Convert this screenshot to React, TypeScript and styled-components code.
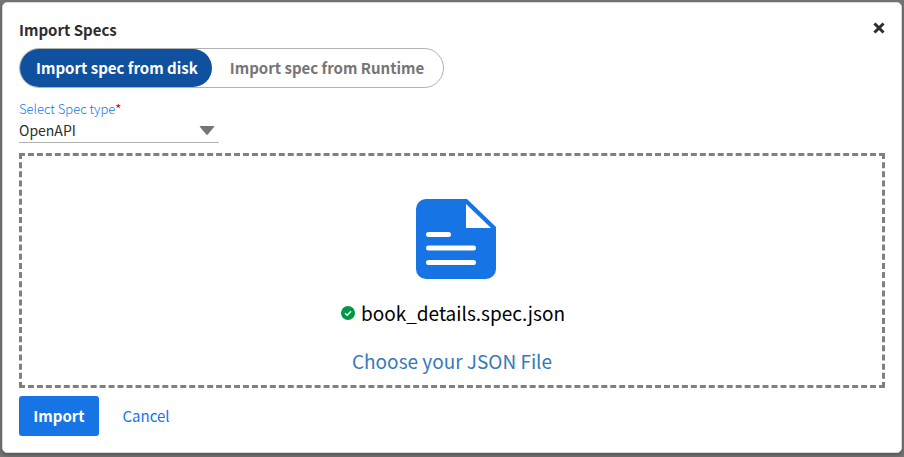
import React, { useState } from "react";
import styled, { createGlobalStyle } from "styled-components";

const GlobalStyle = createGlobalStyle`
  *, *::before, *::after { box-sizing: border-box; }
  body {
    margin: 0;
    background: #757575;
    color: #2d2d2d;
    font-family: "Noto Sans CJK JP", "Noto Sans", sans-serif;
    font-size: 15px;
    line-height: 20px;
  }
  button, select { font: inherit; }
`;

const Overlay = styled.div`
  min-height: 100vh;
  padding: 2px;
  background: #757575;
`;

const Dialog = styled.section`
  padding: 16px;
  background: #fff;
  border: 1px solid #dadada;
  border-radius: 5px;
  box-shadow: 0 2px 4px rgba(0, 0, 0, 0.3);
`;

const Header = styled.header`
  display: flex;
  align-items: flex-start;
  justify-content: space-between;
  height: 29px;
`;

const Title = styled.h1`
  margin: 0;
  font-size: 15px;
  font-weight: 700;
  line-height: 22px;
`;

const CloseButton = styled.button`
  display: flex;
  padding: 3px 0;
  color: #2d2d2d;
  background: none;
  border: 0;
  cursor: pointer;
`;

const Segments = styled.div`
  display: inline-flex;
  height: 40px;
  border: 1px solid #b1b1b1;
  border-radius: 20px;
`;

const Segment = styled.button<{ $active: boolean }>`
  padding: 0 14px 0 16px;
  color: ${(p) => (p.$active ? "#fff" : "#757575")};
  background: ${(p) => (p.$active ? "#0f519f" : "transparent")};
  border: 0;
  border-radius: 20px;
  font-weight: 700;
  text-align: left;
  white-space: nowrap;
  cursor: pointer;

  &:last-child { padding: 0 19px 0 18px; }
`;

const Field = styled.div`
  display: flex;
  flex-direction: column;
  width: 200px;
  margin-top: 11px;
`;

const Label = styled.label`
  color: #1774e5;
  font-size: 13px;
  font-weight: 300;
  line-height: 20px;
`;

const Required = styled.span`
  color: #f00000;
  font-weight: 400;
`;

const SelectWrap = styled.div`
  display: flex;
  align-items: flex-start;
  height: 24px;
  border-bottom: 1px solid #b1b1b1;

  svg { margin: 7px 4px 0 -20px; pointer-events: none; }
`;

const Select = styled.select`
  flex: 1;
  height: 22px;
  padding: 0;
  color: #2d2d2d;
  background: transparent;
  border: 0;
  border-radius: 0;
  appearance: none;
  font-size: 14px;
`;

const DropZone = styled.div`
  display: flex;
  flex-direction: column;
  align-items: center;
  height: 235px;
  margin-top: 10px;
  padding-top: 43px;
  border: 3px dashed #808080;
`;

const FileIcon = styled.div`
  display: flex;
  padding-left: 8px;
`;

const FileRow = styled.div`
  display: flex;
  align-items: center;
  gap: 6px;
  margin-top: 20px;
  padding-left: 2px;
  color: #000;
  font-size: 19px;
  line-height: 28px;
`;

const ChooseLink = styled.a`
  margin-top: 20px;
  color: #337ab7;
  font-size: 19px;
  line-height: 28px;
  text-decoration: none;
`;

const Footer = styled.footer`
  display: flex;
  gap: 7px;
  margin-top: 8px;
`;

const ActionButton = styled.button<{ $primary?: boolean }>`
  min-width: 80px;
  height: 40px;
  padding: 0 14px;
  color: ${(p) => (p.$primary ? "#fff" : "#1774e5")};
  background: ${(p) => (p.$primary ? "#1774e5" : "transparent")};
  border: 0;
  border-radius: 3px;
  font-weight: ${(p) => (p.$primary ? 700 : 400)};
  cursor: pointer;
`;

const CloseIcon = () => (
  <svg width="12" height="12" viewBox="0 0 12 12" aria-hidden="true">
    <path d="M2.5 2.5 9.5 9.5M9.5 2.5 2.5 9.5" stroke="currentColor" strokeWidth="3" strokeLinecap="square" />
  </svg>
);

const CaretIcon = () => (
  <svg width="16" height="10" viewBox="0 0 16 10" aria-hidden="true">
    <path d="M1.5 0h13q1.5 0 .5 1L9 8.3q-1 1-2 0L1 1Q0 0 1.5 0Z" fill="#757575" />
  </svg>
);

const DocumentIcon = () => (
  <svg width="80" height="80" viewBox="0 0 80 80" aria-hidden="true">
    <path d="M10 0h41l29 28v42a10 10 0 0 1-10 10H10A10 10 0 0 1 0 70V10A10 10 0 0 1 10 0Z" fill="#1774e5" />
    <path d="M50 5v24h25Z" fill="#fff" />
    <path d="M12.5 35.5h20M12.5 49h45M12.5 63.5h45" stroke="#fff" strokeWidth="5" strokeLinecap="round" />
  </svg>
);

const CheckIcon = () => (
  <svg width="14" height="14" viewBox="0 0 14 14" aria-hidden="true">
    <circle cx="7" cy="7" r="7" fill="#009845" />
    <path d="m4 7.2 2.2 2L10 5.2" fill="none" stroke="#fff" strokeWidth="1.4" />
  </svg>
);

const sources = ["Import spec from disk", "Import spec from Runtime"];

export default function App() {
  const [source, setSource] = useState(0);

  return (
    <Overlay>
      <GlobalStyle />
      <Dialog role="dialog" aria-labelledby="dialog-title">
        <Header>
          <Title id="dialog-title">Import Specs</Title>
          <CloseButton type="button" aria-label="Close">
            <CloseIcon />
          </CloseButton>
        </Header>
        <Segments role="group" aria-label="Spec source">
          {sources.map((name, i) => (
            <Segment key={name} type="button" $active={source === i} aria-pressed={source === i} onClick={() => setSource(i)}>
              {name}
            </Segment>
          ))}
        </Segments>
        <Field>
          <Label htmlFor="spec-type">
            Select Spec type<Required>*</Required>
          </Label>
          <SelectWrap>
            <Select id="spec-type" defaultValue="OpenAPI">
              <option>OpenAPI</option>
            </Select>
            <CaretIcon />
          </SelectWrap>
        </Field>
        <DropZone>
          <FileIcon>
            <DocumentIcon />
          </FileIcon>
          <FileRow>
            <CheckIcon />
            <span>book_details.spec.json</span>
          </FileRow>
          <ChooseLink href="#">Choose your JSON File</ChooseLink>
        </DropZone>
        <Footer>
          <ActionButton type="button" $primary>Import</ActionButton>
          <ActionButton type="button">Cancel</ActionButton>
        </Footer>
      </Dialog>
    </Overlay>
  );
}
